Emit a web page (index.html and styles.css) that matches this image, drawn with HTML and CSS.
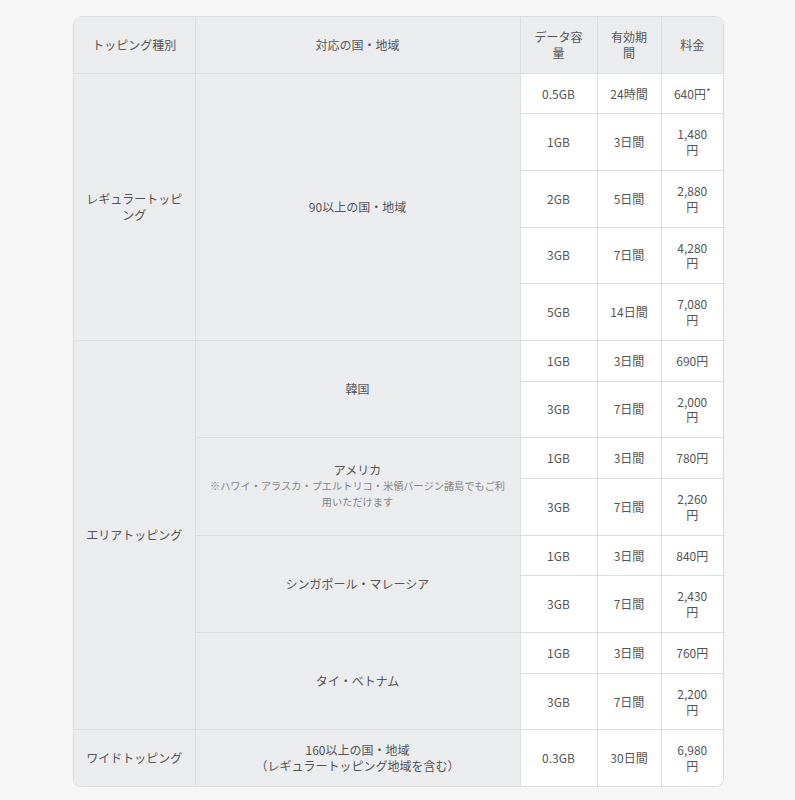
FILE: index.html
```html
<!DOCTYPE html>
<html lang="ja">
<head>
<meta charset="utf-8">
<title>トッピング料金</title>
<link rel="stylesheet" href="styles.css">
</head>
<body>
<div class="table-wrap">
  <table class="plans">
    <colgroup>
      <col class="c-type">
      <col class="c-area">
      <col class="c-data">
      <col class="c-term">
      <col class="c-price">
    </colgroup>
    <thead>
      <tr>
        <th>トッピング種別</th>
        <th>対応の国・地域</th>
        <th>データ容量</th>
        <th>有効期間</th>
        <th>料金</th>
      </tr>
    </thead>
    <tbody>
      <tr>
        <th rowspan="5">レギュラートッピング</th>
        <th rowspan="5">90以上の国・地域</th>
        <td>0.5GB</td><td>24時間</td><td>640円<sup>*</sup></td>
      </tr>
      <tr><td>1GB</td><td>3日間</td><td>1,480円</td></tr>
      <tr><td>2GB</td><td>5日間</td><td>2,880円</td></tr>
      <tr><td>3GB</td><td>7日間</td><td>4,280円</td></tr>
      <tr><td>5GB</td><td>14日間</td><td>7,080円</td></tr>

      <tr>
        <th rowspan="8">エリアトッピング</th>
        <th rowspan="2">韓国</th>
        <td>1GB</td><td>3日間</td><td>690円</td>
      </tr>
      <tr><td>3GB</td><td>7日間</td><td>2,000円</td></tr>
      <tr>
        <th rowspan="2">アメリカ<span class="note">※ハワイ・アラスカ・プエルトリコ・米領バージン諸島でもご利用いただけます</span></th>
        <td>1GB</td><td>3日間</td><td>780円</td>
      </tr>
      <tr><td>3GB</td><td>7日間</td><td>2,260円</td></tr>
      <tr>
        <th rowspan="2">シンガポール・マレーシア</th>
        <td>1GB</td><td>3日間</td><td>840円</td>
      </tr>
      <tr><td>3GB</td><td>7日間</td><td>2,430円</td></tr>
      <tr>
        <th rowspan="2">タイ・ベトナム</th>
        <td>1GB</td><td>3日間</td><td>760円</td>
      </tr>
      <tr><td>3GB</td><td>7日間</td><td>2,200円</td></tr>

      <tr>
        <th>ワイドトッピング</th>
        <th>160以上の国・地域<br>（レギュラートッピング地域を含む）</th>
        <td>0.3GB</td><td>30日間</td><td>6,980円</td>
      </tr>
    </tbody>
  </table>
</div>
</body>
</html>
```

FILE: styles.css
```css
html, body {
  margin: 0;
  padding: 0;
  background: #f6f6f6;
}

body {
  font-family: "Noto Sans CJK JP", "Noto Sans", sans-serif;
  font-size: 12px;
  color: #555;
  padding: 16px 0 0 73px;
}

.table-wrap {
  width: 651px;
  border: 1px solid #dcdddf;
  border-radius: 9px;
  overflow: hidden;
  background: #fff;
  box-shadow: 0 1px 2px rgba(0, 0, 0, 0.07);
  box-sizing: border-box;
}

.plans {
  width: 100%;
  table-layout: fixed;
  border-collapse: collapse;
}

.c-type { width: 121px; }
.c-area { width: 325px; }
.c-data { width: 77px; }
.c-term { width: 64px; }
.c-price { width: 62px; }

.plans th,
.plans td {
  border: 1px solid #dcdddf;
  padding: 12px;
  line-height: 15.8px;
  text-align: center;
  vertical-align: middle;
  font-weight: 400;
  word-break: break-all;
}

.plans tr:first-child > * { border-top: 0; }
.plans tr > *:last-child { border-right: 0; }
.plans tbody tr:last-child > * { border-bottom: 0; }
.plans thead th:first-child,
.plans tbody tr > th[rowspan="5"]:first-child,
.plans tbody tr > th[rowspan="8"]:first-child,
.plans tbody tr:last-child > th:first-child { border-left: 0; }

.plans th {
  background: #ebecee;
}

.plans td {
  background: #fff;
}

.plans sup {
  font-size: 10px;
  line-height: 0;
  vertical-align: 3px;
}

.note {
  display: block;
  font-size: 10.2px;
  line-height: 16px;
  color: #858585;
}
```
